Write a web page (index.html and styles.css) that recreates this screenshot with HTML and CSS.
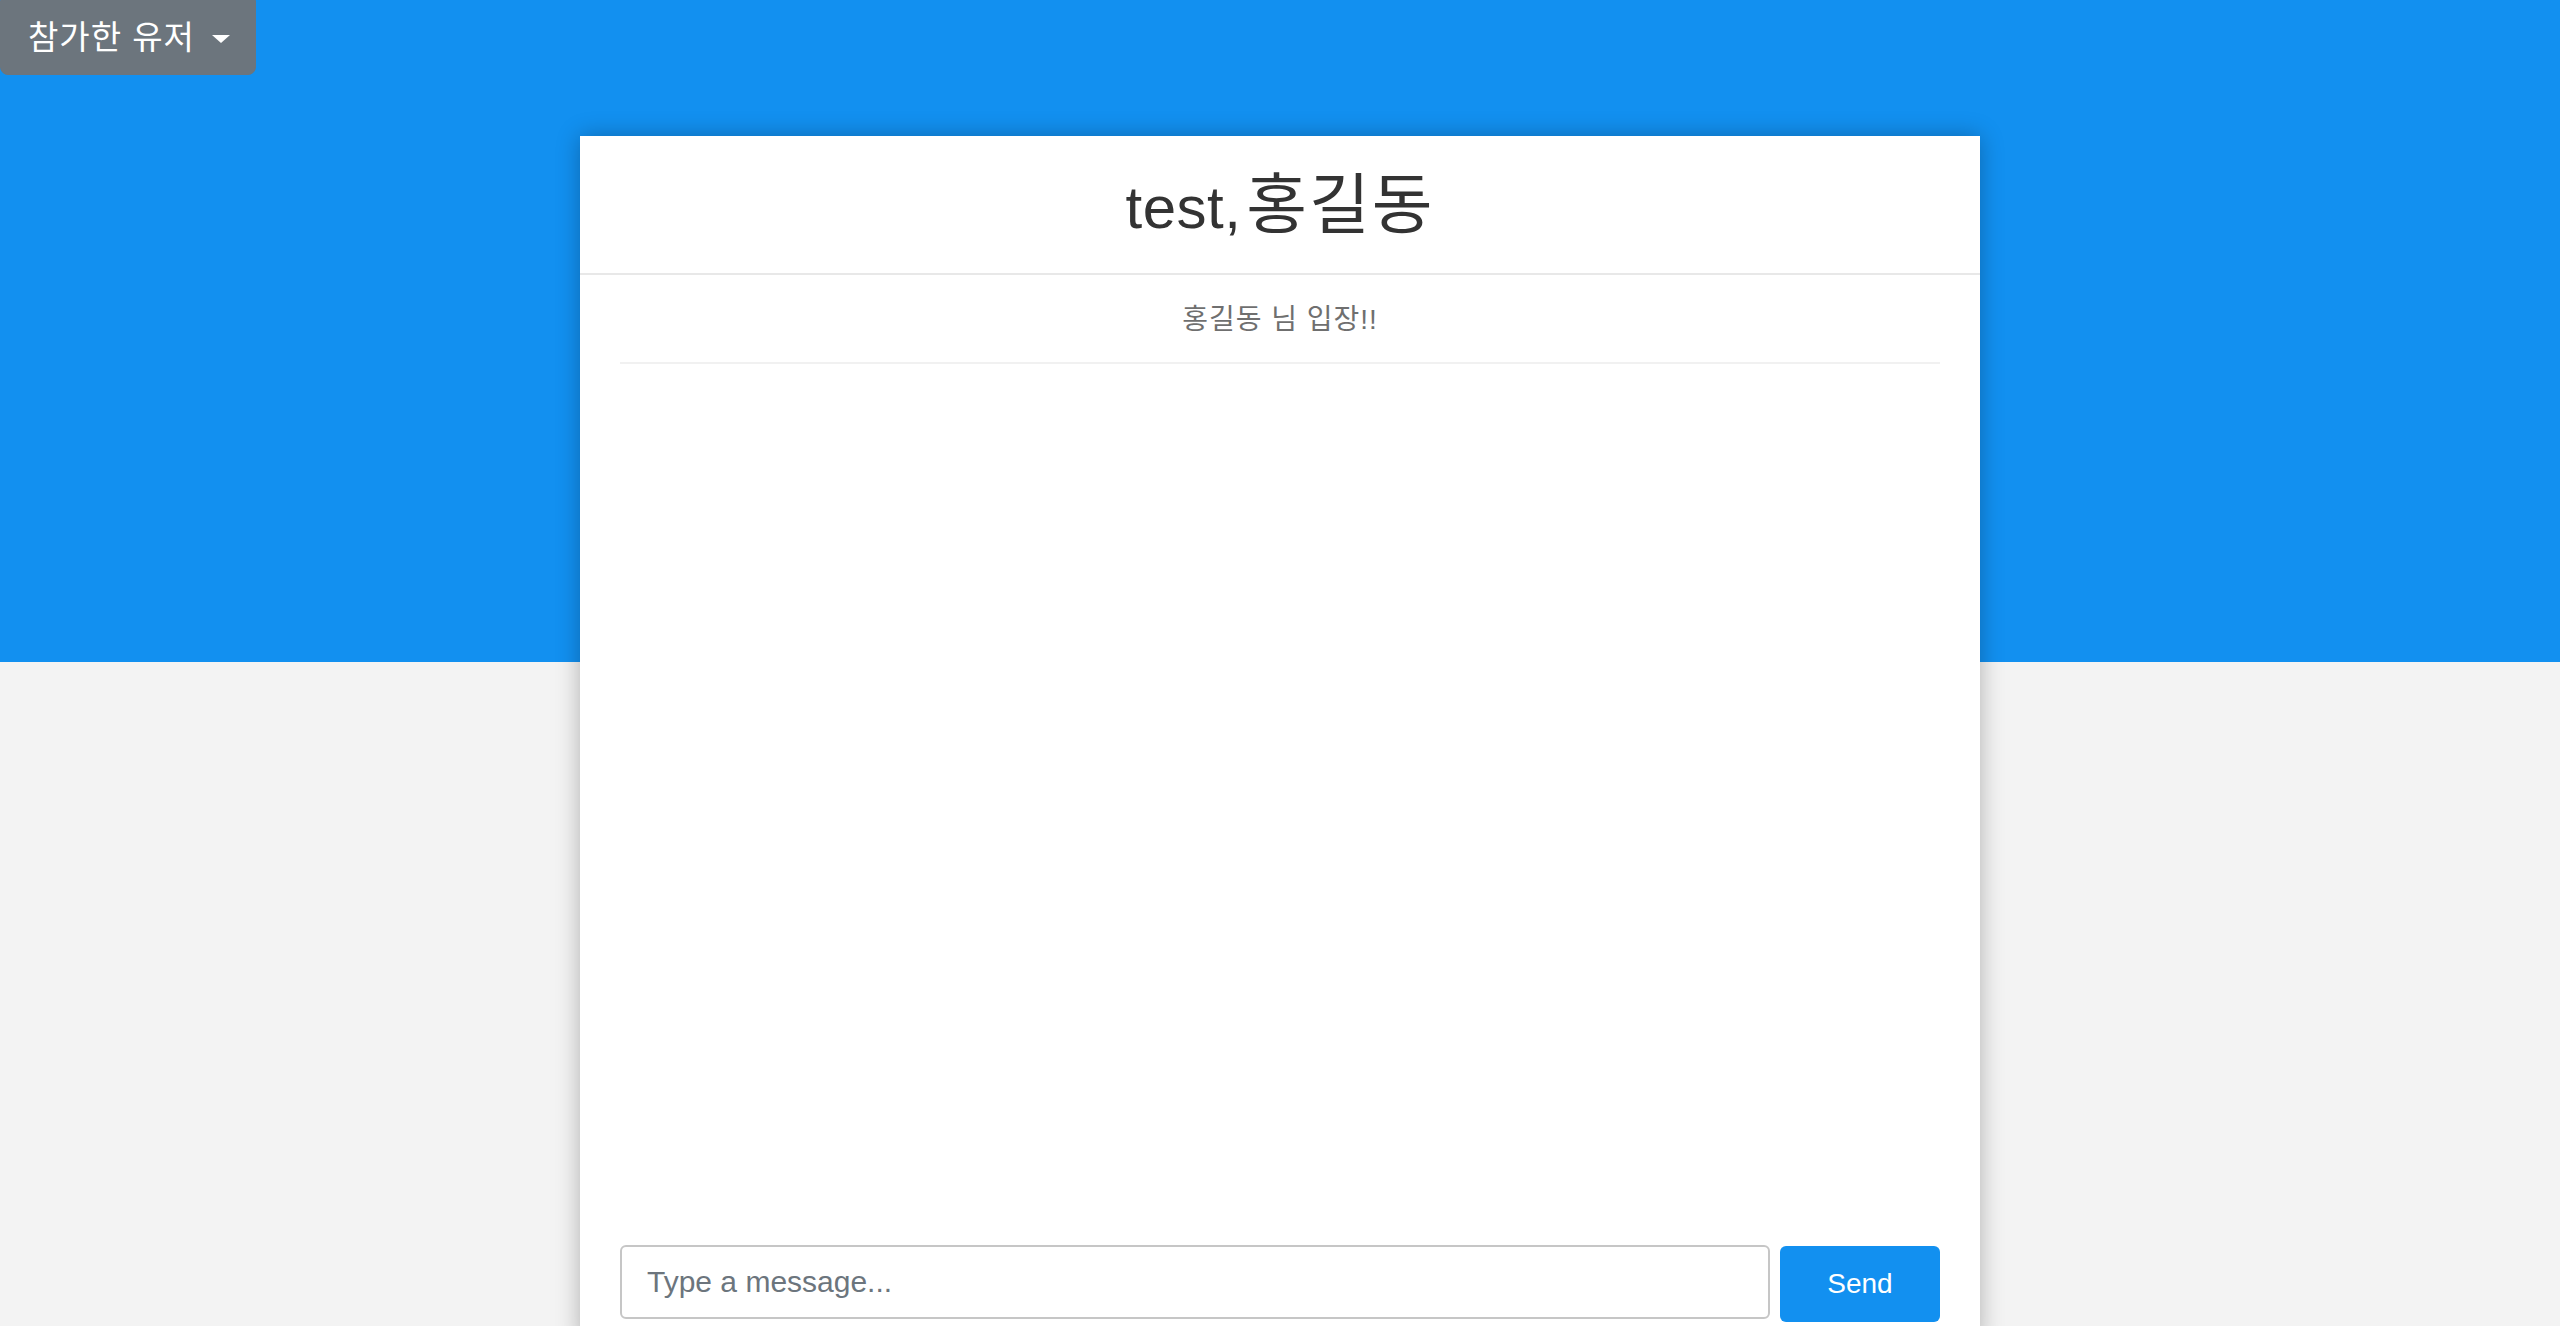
FILE: index.html
```html
<!DOCTYPE html>
<html lang="ko">
<head>
<meta charset="utf-8">
<title>Chat</title>
<link rel="stylesheet" href="styles.css">
</head>
<body>
<div class="app">
  <div class="topbar">
    <button class="dropdown-toggle" type="button"><span class="dropdown-label">참가한 유저</span><span class="caret"></span></button>
  </div>
  <main class="card">
    <header class="card-header">
      <h1 class="room-title">test,<span class="ko">홍길동</span></h1>
    </header>
    <ul class="messages">
      <li class="message system">홍길동 님 입장!!</li>
    </ul>
    <form class="composer">
      <input class="composer-input" type="text" placeholder="Type a message...">
      <button class="send-btn" type="button">Send</button>
    </form>
  </main>
</div>
</body>
</html>
```

FILE: styles.css
```css
html, body {
  margin: 0;
  padding: 0;
}

body {
  font-family: "Liberation Sans", "Noto Sans CJK KR", sans-serif;
  background: #f3f3f3;
}

.app {
  height: 100vh;
  overflow: hidden;
  background: linear-gradient(to bottom, #1290f0 0, #1290f0 662px, #f3f3f3 662px, #f3f3f3 100%);
}

.topbar {
  height: 75px;
  display: flex;
  align-items: flex-start;
}

.dropdown-toggle {
  display: inline-flex;
  align-items: center;
  height: 75px;
  padding: 0 25px 0 27px;
  border: 1px solid #6c757d;
  border-radius: 0 0 8px 8px;
  background: #6c757d;
  color: #ffffff;
  font-family: "Liberation Sans", "Noto Sans CJK KR", sans-serif;
  font-size: 33px;
  line-height: 45px;
  cursor: pointer;
}

.dropdown-label {
  letter-spacing: 1px;
}

.caret {
  display: inline-block;
  width: 0;
  height: 0;
  margin-left: 17px;
  margin-top: 2px;
  border-top: 8px solid #ffffff;
  border-left: 9px solid transparent;
  border-right: 9px solid transparent;
}

.card {
  width: 1400px;
  height: 1206px;
  margin: 61px auto 0;
  background: #ffffff;
  box-shadow: 0 0 22px rgba(0, 0, 0, 0.28);
  display: flex;
  flex-direction: column;
}

.card-header {
  height: 137px;
  border-bottom: 2px solid #e8e8e8;
  display: flex;
  align-items: center;
  justify-content: center;
}

.room-title {
  margin: 0;
  font-weight: 400;
  font-size: 60px;
  line-height: 137px;
  color: #333333;
  padding-top: 3px;
  letter-spacing: 0.5px;
}

.room-title .ko {
  font-size: 66px;
  margin-left: 5px;
  letter-spacing: 2px;
}

.messages {
  flex: 1;
  list-style: none;
  margin: 0;
  padding: 0 40px;
}

.message {
  padding: 30px 0 28px;
  line-height: 29px;
  font-size: 28px;
  letter-spacing: 1px;
  border-bottom: 2px solid #f1f1f1;
}

.message.system {
  text-align: center;
  color: #6f6f6f;
}

.composer {
  display: flex;
  align-items: flex-start;
  gap: 10px;
  padding: 0 40px 20px;
  margin: 0;
}

.composer-input {
  flex: 1;
  height: 74px;
  box-sizing: border-box;
  border: 2px solid #c6c6c6;
  border-radius: 6px;
  padding: 0 25px;
  font-family: "Liberation Sans", "Noto Sans CJK KR", sans-serif;
  font-size: 30px;
  color: #495057;
  outline: none;
}

.composer-input::placeholder {
  color: #6c757d;
  opacity: 1;
}

.send-btn {
  width: 160px;
  height: 76px;
  margin-top: 1px;
  border: none;
  border-radius: 6px;
  background: #1290f0;
  color: #ffffff;
  font-family: "Liberation Sans", "Noto Sans CJK KR", sans-serif;
  font-size: 28px;
  cursor: pointer;
}
```
